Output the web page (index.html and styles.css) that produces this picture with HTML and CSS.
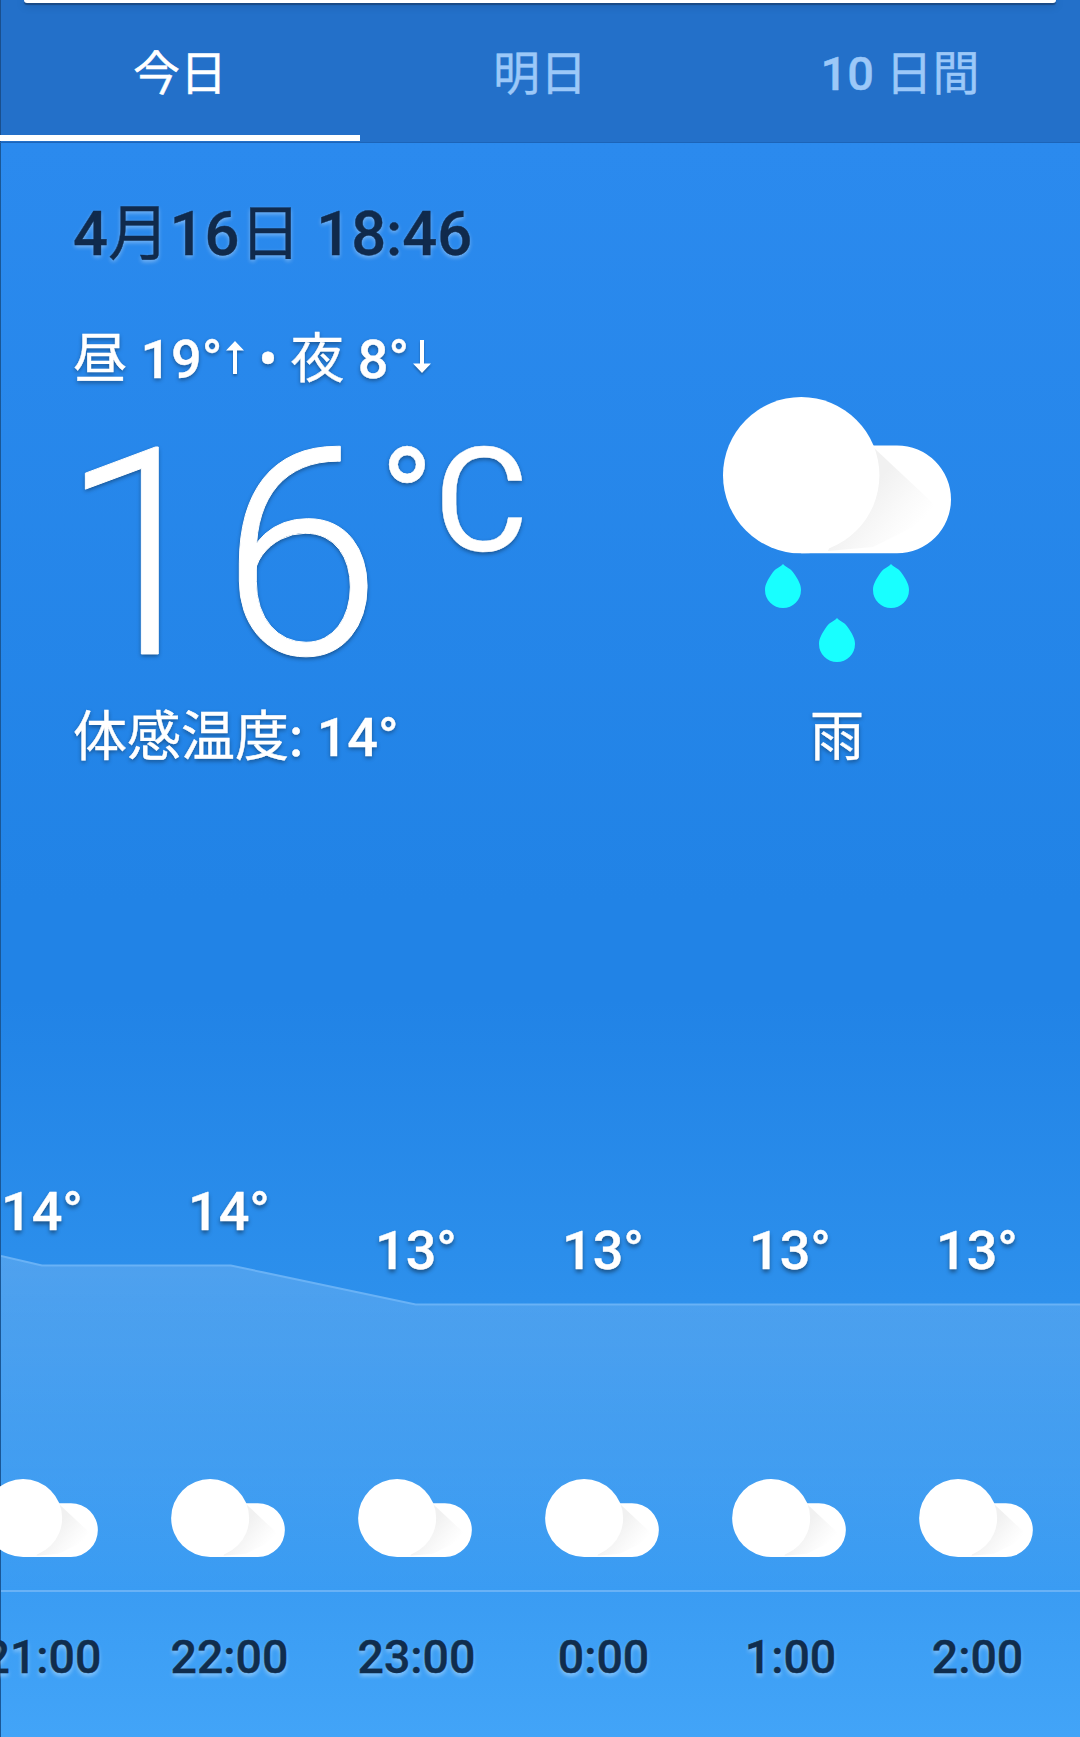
FILE: index.html
```html
<!DOCTYPE html>
<html lang="ja">
<head>
<meta charset="utf-8">
<title>天気</title>
<link rel="stylesheet" href="styles.css">
</head>
<body>
<svg class="defs" width="0" height="0" aria-hidden="true">
  <defs>
    <linearGradient id="fold" gradientUnits="userSpaceOnUse" x1="150" y1="90" x2="196" y2="128">
      <stop offset="0" stop-color="#f1f1f1"/>
      <stop offset=".6" stop-color="#fafafa"/>
      <stop offset="1" stop-color="#ffffff"/>
    </linearGradient>
    <symbol id="cloud" viewBox="0 0 228 156.4">
      <path fill="#fff" d="M78.2 48.4H174a54 54 0 0 1 0 108H78.2z"/>
      <path fill="url(#fold)" d="M150 50L214 110L190 130L150 150L105 154z"/>
      <circle cx="78.2" cy="78.2" r="78.2" fill="#fff"/>
    </symbol>
    <symbol id="drop" viewBox="0 0 36 44">
      <path fill="#18ffff" d="M18 0C21 3.500 26 4 30 11C33 16 36 20 36 26A18 18 0 0 1 0 26C0 20 3 16 6 11C10 4 15 3.500 18 0z"/>
    </symbol>
  </defs>
</svg>
<div class="app">
  <header class="header">
    <div class="search"></div>
    <nav class="tabs">
      <a class="tab active"><span class="ja">今日</span></a>
      <a class="tab"><span class="ja">明日</span></a>
      <a class="tab">10 <span class="ja">日間</span></a>
    </nav>
  </header>
  <main class="current">
    <section class="details">
      <div class="date">4<span class="ja">月</span>16<span class="ja">日</span> 18:46</div>
      <div class="range">
        <span><span class="ja">昼</span> 19°</span>
        <svg class="arrow up" viewBox="0 0 18 33"><path d="M9 0L18 9.500H11V33H7V9.500H0z"/></svg>
        <span class="dot">•</span>
        <span><span class="ja">夜</span> 8°</span>
        <svg class="arrow down" viewBox="0 0 18 33"><path d="M9 33L0 23.500H7V0H11V23.500H18z"/></svg>
      </div>
      <div class="temp"><span class="value">16</span><span class="unit">°C</span></div>
      <div class="feels"><span class="ja">体感温度</span>: 14°</div>
    </section>
    <section class="condition">
      <svg class="rain" viewBox="0 0 228 265">
        <use href="#cloud" width="228" height="156.4"/>
        <use href="#drop" x="42" y="167" width="36" height="44"/>
        <use href="#drop" x="150" y="167" width="36" height="44"/>
        <use href="#drop" x="96" y="221" width="36" height="44"/>
      </svg>
      <div class="label ja">雨</div>
    </section>
  </main>
  <section class="hourly">
    <svg class="chart" viewBox="0 0 1080 557" preserveAspectRatio="none">
      <defs>
        <linearGradient id="area" x1="0" y1="0" x2="0" y2="1">
          <stop offset="0" stop-color="#fff" stop-opacity=".17"/>
          <stop offset="1" stop-color="#fff" stop-opacity="0"/>
        </linearGradient>
      </defs>
      <path fill="url(#area)" d="M0 76L41 85.500H230L415 124.500H1080V411H0z"/>
      <path class="line" d="M0 76L41 85.500H230L415 124.500H1080"/>
      <path class="line" d="M0 411H1080"/>
    </svg>
    <div class="hours">
      <div class="hour"><span class="deg">14°</span><svg class="cloud"><use href="#cloud"/></svg><span class="time">21:00</span></div>
      <div class="hour"><span class="deg">14°</span><svg class="cloud"><use href="#cloud"/></svg><span class="time">22:00</span></div>
      <div class="hour"><span class="deg low">13°</span><svg class="cloud"><use href="#cloud"/></svg><span class="time">23:00</span></div>
      <div class="hour"><span class="deg low">13°</span><svg class="cloud"><use href="#cloud"/></svg><span class="time">0:00</span></div>
      <div class="hour"><span class="deg low">13°</span><svg class="cloud"><use href="#cloud"/></svg><span class="time">1:00</span></div>
      <div class="hour"><span class="deg low">13°</span><svg class="cloud"><use href="#cloud"/></svg><span class="time">2:00</span></div>
    </div>
  </section>
</div>
</body>
</html>
```
FILE: styles.css
```css
* { box-sizing: border-box; }
body {
  margin: 0;
  font-family: Roboto, "Noto Sans CJK JP", sans-serif;
  font-weight: 500;
  color: #fff;
  -webkit-text-stroke: .4px;
}
.defs { position: absolute; }
.ja { font-weight: 400; }
.app {
  width: 1080px;
  height: 1737px;
  overflow: hidden;
  display: flex;
  flex-direction: column;
  background: linear-gradient(#2b8aee 143px, #2183e6 900px, #2183e6 1000px, #2d90ec 1300px, #3a9cf3 1591px, #42a4f8 1737px);
  box-shadow: inset 1px 0 #1a5796;
}
.header {
  height: 143px;
  display: flex;
  flex-direction: column;
  padding-bottom: 1px;
  background: #2370c9;
  border-bottom: 1px solid #1c64b8;
  box-shadow: inset 1px 0 #1a4f8d;
}
.search {
  height: 3px;
  margin: 0 24px;
  background: #fff;
  border-radius: 0 0 4px 4px;
  box-shadow: 0 2px 1px #1a4a85, 0 2px 8px rgba(0, 0, 0, .25);
}
.tabs {
  flex: 1;
  display: grid;
  grid-template-columns: repeat(3, 1fr);
}
.tab {
  display: flex;
  justify-content: center;
  padding-top: 43px;
  font-size: 47px;
  line-height: 56px;
  white-space: pre;
  color: #9cc8f8;
  border-bottom: 6px solid transparent;
}
.tab.active {
  color: #fff;
  border-bottom-color: #fff;
}
.current {
  height: 1037px;
  display: grid;
  grid-template-columns: 675px 324px;
  text-shadow: 0 2px 4px rgba(0, 0, 0, .4);
}
.details { padding: 55px 0 0 73px; }
.date {
  font-size: 61.5px;
  line-height: 72px;
  color: #102a4c;
  text-shadow: 0 2px 4px rgba(255, 255, 255, .4);
}
.range {
  display: flex;
  align-items: center;
  margin-top: 58px;
  font-size: 54px;
  line-height: 64px;
}
.arrow {
  width: 18px;
  height: 33px;
  fill: #fff;
  filter: drop-shadow(0 2px 1px rgba(0, 0, 0, .3));
}
.up { margin: -6px 14px 0 4px; }
.down { margin: -8px 0 0 4px; }
.dot { margin-right: 13px; }
.temp {
  display: flex;
  align-items: flex-start;
  height: 240px;
  margin: 43px 0 0 -13px;
}
.value {
  font-size: 290px;
  line-height: 240px;
  font-weight: 300;
  -webkit-text-stroke: 1px;
}
.unit {
  margin: -6px 0 0 -2px;
  font-size: 145px;
  line-height: 145px;
  font-weight: 400;
}
.feels {
  margin-top: 31px;
  font-size: 54px;
  line-height: 64px;
}
.condition {
  display: flex;
  flex-direction: column;
  align-items: center;
  padding-top: 254px;
}
.rain {
  width: 228px;
  height: 265px;
}
.label {
  margin-top: 44px;
  font-size: 54px;
  line-height: 64px;
}
.hourly {
  position: relative;
  height: 557px;
}
.chart {
  position: absolute;
  inset: 0 0 0 1px;
  width: 1079px;
  height: 557px;
}
.line {
  fill: none;
  stroke: #69b2f6;
  stroke-width: 2;
}
.hours {
  position: relative;
  width: 1122px;
  margin-left: -51px;
  display: grid;
  grid-template-columns: repeat(6, 187px);
}
.hour {
  display: flex;
  flex-direction: column;
  align-items: center;
}
.deg {
  height: 299px;
  padding-right: 1px;
  font-size: 54px;
  line-height: 64px;
  text-shadow: 0 3px 4px rgba(0, 0, 0, .45);
}
.deg.low { padding-top: 39px; }
.cloud {
  width: 114px;
  height: 78px;
  margin-right: 3px;
}
.time {
  margin-top: 72px;
  font-size: 46.5px;
  line-height: 56px;
  color: #102d4d;
  text-shadow: 0 3px 4px rgba(255, 255, 255, .4);
}
```
